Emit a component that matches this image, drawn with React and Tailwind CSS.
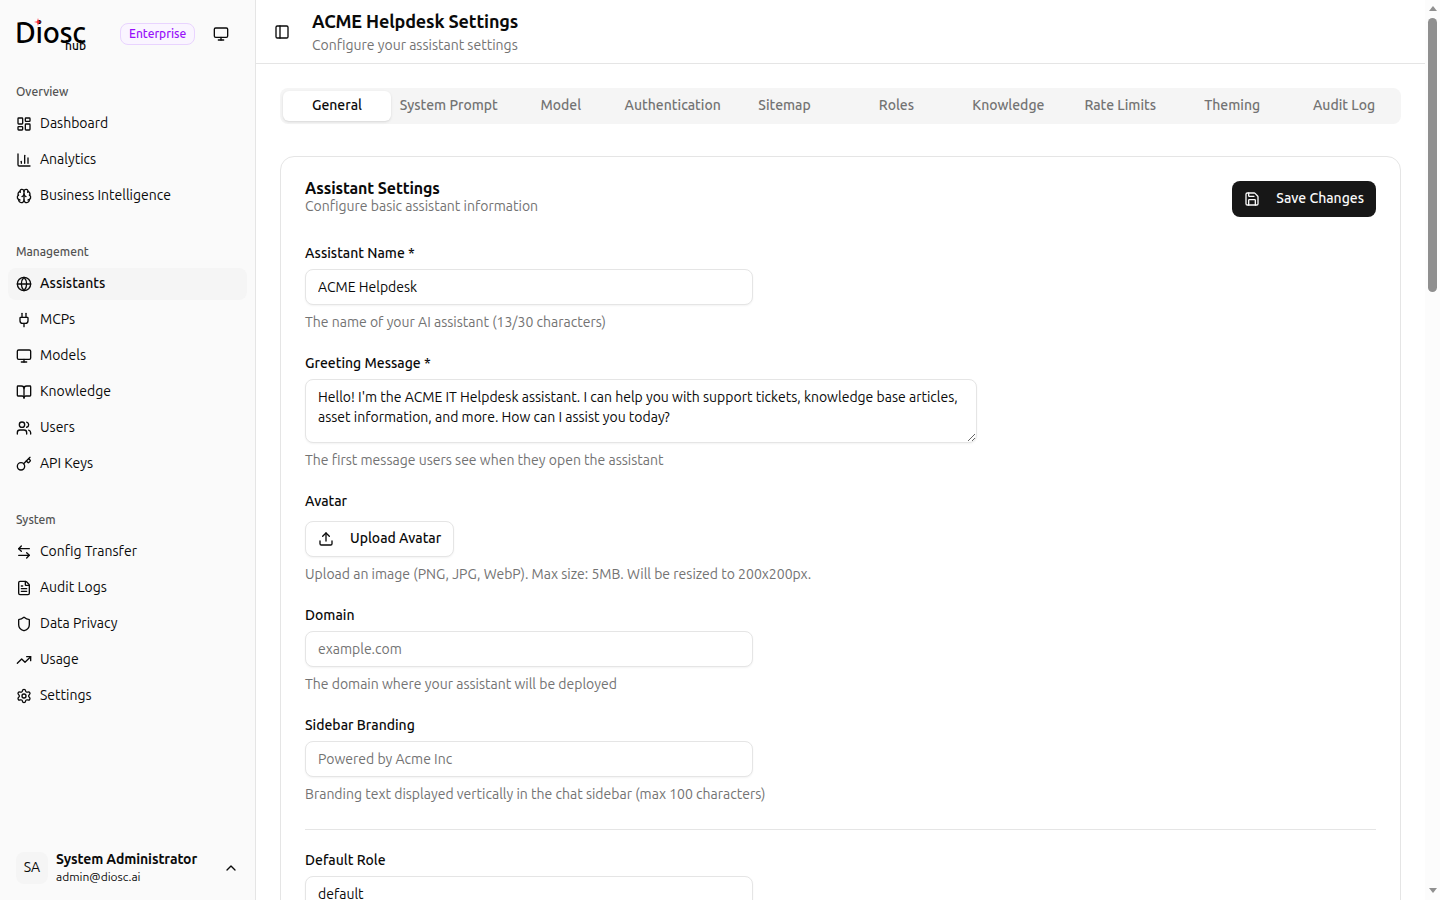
import {
  LayoutDashboard, ChartColumn, Brain, Globe, Plug, Monitor, BookOpen, Users, Key, ArrowLeftRight,
  FileText, Shield, TrendingUp, Settings, ChevronUp, PanelLeft, Save, Upload,
} from 'lucide-react'

const groups = [
  { label: 'Overview', items: [
    { name: 'Dashboard', icon: LayoutDashboard },
    { name: 'Analytics', icon: ChartColumn },
    { name: 'Business Intelligence', icon: Brain },
  ] },
  { label: 'Management', items: [
    { name: 'Assistants', icon: Globe, active: true },
    { name: 'MCPs', icon: Plug },
    { name: 'Models', icon: Monitor },
    { name: 'Knowledge', icon: BookOpen },
    { name: 'Users', icon: Users },
    { name: 'API Keys', icon: Key },
  ] },
  { label: 'System', items: [
    { name: 'Config Transfer', icon: ArrowLeftRight },
    { name: 'Audit Logs', icon: FileText },
    { name: 'Data Privacy', icon: Shield },
    { name: 'Usage', icon: TrendingUp },
    { name: 'Settings', icon: Settings },
  ] },
]

const tabs = ['General', 'System Prompt', 'Model', 'Authentication', 'Sitemap', 'Roles', 'Knowledge', 'Rate Limits', 'Theming', 'Audit Log']

const inputCls = 'h-9 w-[448px] px-3 border border-[#e5e5e5] rounded-lg text-sm text-[#0a0a0a] bg-white shadow-xs outline-none placeholder:text-[#737373]'

function Field({ label, help, children }) {
  return (
    <div className="flex flex-col gap-2">
      <label className="h-[14px] text-sm leading-[12px] font-medium text-[#0a0a0a]">{label}</label>
      {children}
      <p className="h-5 text-sm leading-[18px] text-[#737373]">{help}</p>
    </div>
  )
}

export default function App() {
  return (
    <div className="flex h-screen overflow-hidden bg-white" style={{ fontFamily: '"Ubuntu", "Noto Sans", sans-serif' }}>
      {/* Sidebar */}
      <aside className="w-[256px] shrink-0 flex flex-col bg-[#fafafa] border-r border-[#e5e5e5] text-[#0a0a0a]">
        <div className="h-[67px] px-4 flex items-center shrink-0">
          <div className="relative w-[72px] h-[36px]">
            <span className="absolute -left-[1px] top-0 text-[29px] leading-[32px] font-medium tracking-[-0.3px] text-black">Diosc</span>
            <span className="absolute right-[2px] top-[23px] text-[12px] leading-[14px] font-medium text-black">hub</span>
            <svg className="absolute left-[18px] top-[2px] w-2 h-2 text-red-500" viewBox="0 0 8 8" fill="currentColor">
              <path d="M4 0l.8 3.2L8 4l-3.2.8L4 8l-.8-3.2L0 4l3.2-.8z" />
            </svg>
          </div>
          <span className="ml-[32px] px-2 h-[22px] flex items-center rounded-lg border border-purple-200 bg-purple-50 text-xs font-medium text-purple-600">Enterprise</span>
          <Monitor className="ml-auto mr-[10px] w-4 h-4" />
        </div>

        <nav className="flex-1 px-2 pt-[9px]">
          {groups.map(group => (
            <div key={group.label} className="mb-6">
              <div className="h-8 px-2 flex items-center text-xs font-medium text-[#525252]">{group.label}</div>
              <ul className="flex flex-col gap-1">
                {group.items.map(({ name, icon: Icon, active }) => (
                  <li key={name} className={`h-8 px-2 flex items-center gap-2 rounded-lg text-sm ${active ? 'bg-[#f5f5f5] font-medium' : ''}`}>
                    <Icon className="w-4 h-4 shrink-0" />
                    <span className="pb-[2px]">{name}</span>
                  </li>
                ))}
              </ul>
            </div>
          ))}
        </nav>

        <div className="h-[64px] px-4 flex items-center gap-2 shrink-0">
          <div className="w-8 h-8 pb-[2px] rounded-lg bg-[#f5f5f5] flex items-center justify-center text-sm">SA</div>
          <div className="flex-1 min-w-0 pb-[2px]">
            <p className="text-sm leading-5 font-semibold tracking-[-0.1px]">System Administrator</p>
            <p className="text-xs leading-4">admin@diosc.ai</p>
          </div>
          <ChevronUp className="w-4 h-4" />
        </div>
      </aside>

      {/* Main */}
      <main className="flex-1 min-w-0 overflow-y-auto bg-white">
        <header className="h-16 px-3 flex items-center gap-4 border-b border-[#e5e5e5]">
          <div className="w-7 h-7 flex items-center justify-center">
            <PanelLeft className="w-4 h-4 text-[#0a0a0a]" />
          </div>
          <div className="pb-[1px]">
            <h1 className="text-lg leading-[26px] font-semibold tracking-[-0.14px] text-[#0a0a0a]">ACME Helpdesk Settings</h1>
            <p className="mt-px text-sm leading-5 text-[#737373]">Configure your assistant settings</p>
          </div>
        </header>

        <div className="px-6 pt-6 pb-6">
          <div className="h-9 p-[3px] grid grid-cols-10 gap-1 rounded-lg bg-[#f5f5f5]">
            {tabs.map((tab, i) => (
              <div key={tab} className={`pb-[2px] flex items-center justify-center rounded-md text-sm font-medium ${i === 0 ? 'bg-white text-[#0a0a0a] shadow-sm' : 'text-[#737373]'}`}>
                {tab}
              </div>
            ))}
          </div>

          <section className="mt-8 min-h-[2658px] rounded-[14px] border border-[#e5e5e5] bg-white p-6">
            <div className="flex items-start justify-between mb-[30px]">
              <div>
                <h2 className="h-4 text-base leading-[14px] font-semibold tracking-[-0.11px] text-[#0a0a0a]">Assistant Settings</h2>
                <p className="h-5 text-sm leading-[18px] text-[#737373]">Configure basic assistant information</p>
              </div>
              <button className="h-9 px-3 pb-[2px] flex items-center gap-2 rounded-lg bg-[#171717] text-sm font-medium text-[#fafafa]">
                <Save className="w-4 h-4 mr-2 mt-[2px]" />
                Save Changes
              </button>
            </div>

            <div className="flex flex-col gap-6">
              <Field label="Assistant Name *" help="The name of your AI assistant (13/30 characters)">
                <input className={inputCls} defaultValue="ACME Helpdesk" />
              </Field>
              <Field label="Greeting Message *" help="The first message users see when they open the assistant">
                <textarea
                  className="h-16 w-[672px] px-3 pt-[7px] pb-2 border border-[#e5e5e5] rounded-lg text-sm leading-5 text-[#0a0a0a] bg-white shadow-xs outline-none"
                  defaultValue="Hello! I'm the ACME IT Helpdesk assistant. I can help you with support tickets, knowledge base articles, asset information, and more. How can I assist you today?"
                />
              </Field>
              <Field label="Avatar" help="Upload an image (PNG, JPG, WebP). Max size: 5MB. Will be resized to 200x200px.">
                <button className="mt-1 self-start h-9 px-3 pb-[2px] flex items-center gap-2 rounded-lg border border-[#e5e5e5] bg-white shadow-xs text-sm font-medium text-[#0a0a0a]">
                  <Upload className="w-4 h-4 mr-2 mt-[2px]" />
                  Upload Avatar
                </button>
              </Field>
              <Field label="Domain" help="The domain where your assistant will be deployed">
                <input className={inputCls} placeholder="example.com" />
              </Field>
              <Field label="Sidebar Branding" help="Branding text displayed vertically in the chat sidebar (max 100 characters)">
                <input className={inputCls} placeholder="Powered by Acme Inc" />
              </Field>
              <div className="h-px bg-[#e5e5e5]" />
              <Field label="Default Role" help="The role used when no role is specified">
                <input className={inputCls} defaultValue="default" />
              </Field>
            </div>
          </section>
        </div>
      </main>

      {/* Window scrollbar, the headless browser hides the native one */}
      <div className="w-[15px] shrink-0 h-screen flex flex-col items-center bg-[#fcfcfc]">
        <div className="mt-[6px] w-0 h-0 border-x-[4.5px] border-x-transparent border-b-[5px] border-b-[#8f8f8f]" />
        <div className="mt-[7px] w-[9px] h-[274px] rounded-full bg-[#8f8f8f]" />
        <div className="mt-auto mb-[7px] w-0 h-0 border-x-[4.5px] border-x-transparent border-t-[5px] border-t-[#8f8f8f]" />
      </div>
    </div>
  )
}
